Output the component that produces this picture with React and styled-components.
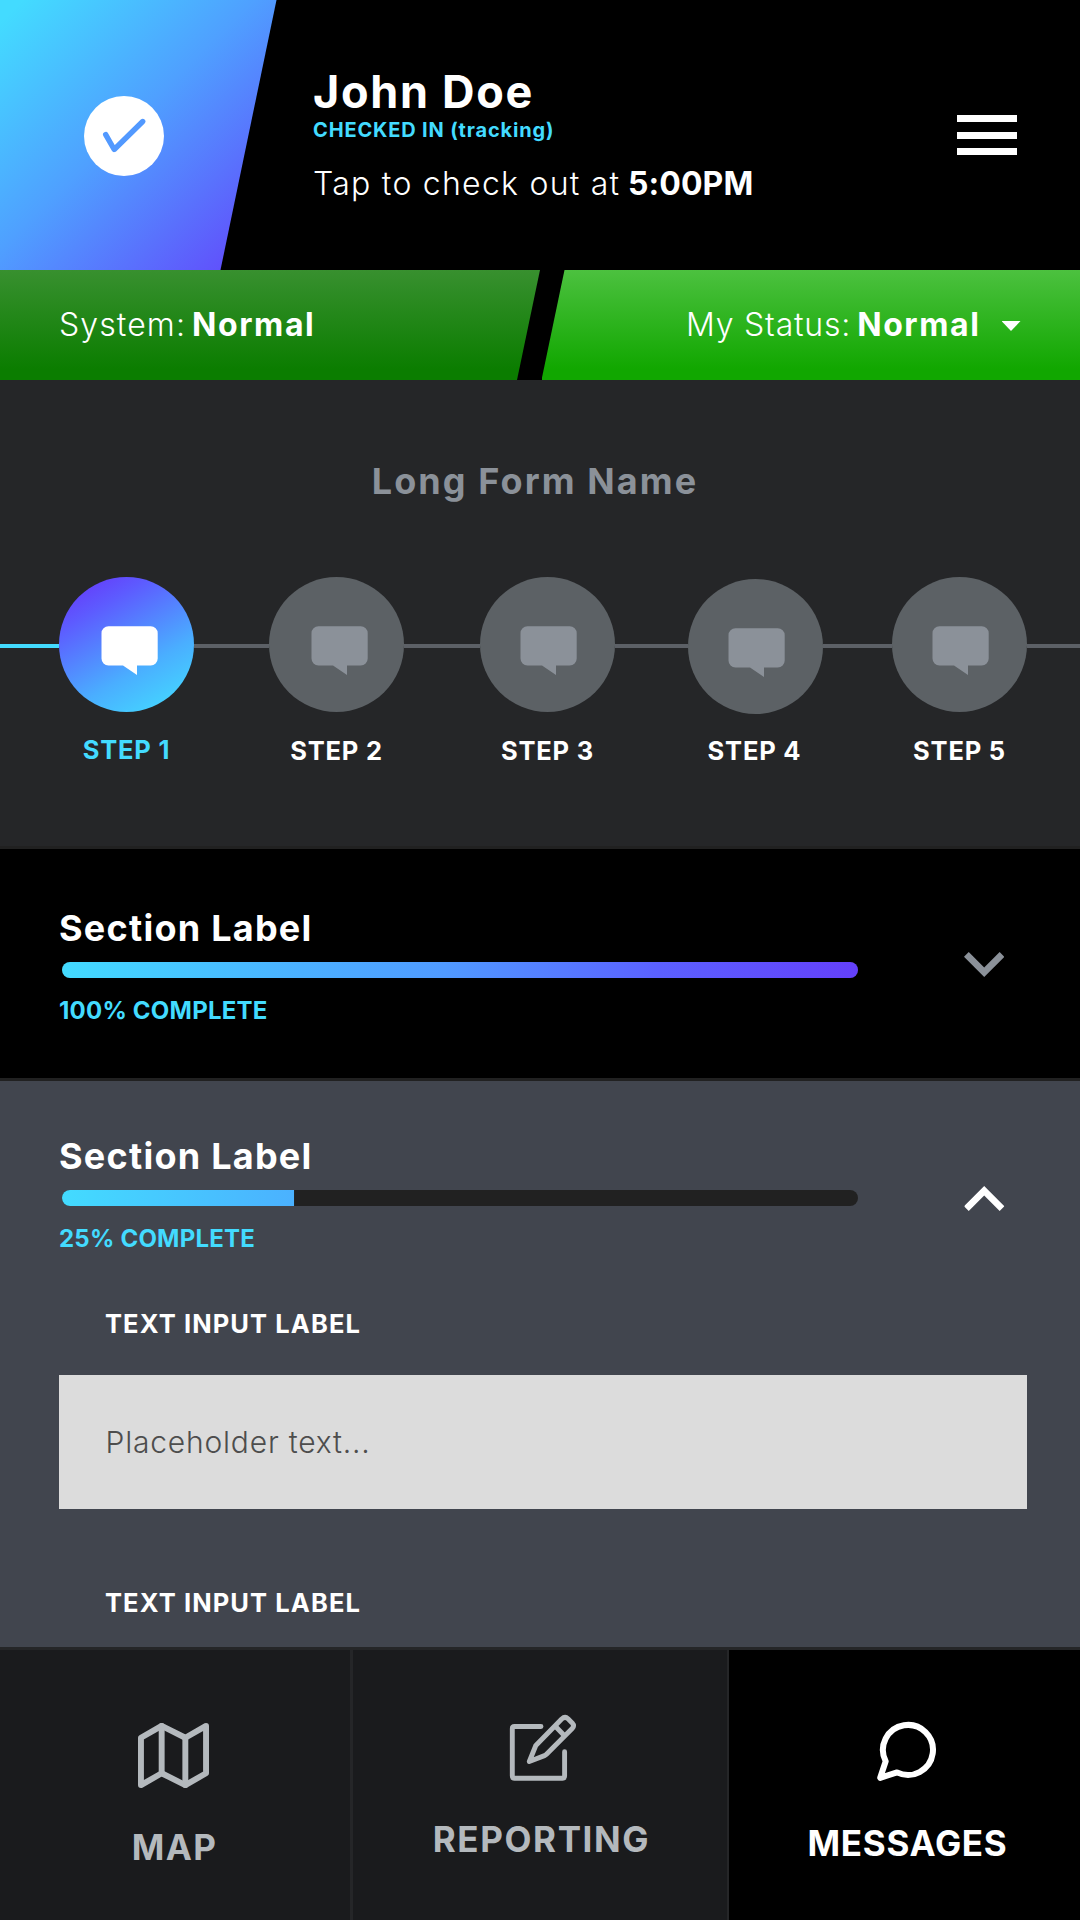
import { Fragment } from "react";
import { createGlobalStyle, styled } from "styled-components";
import { FiMap } from "react-icons/fi";

const steps = [
  { label: "STEP 1", active: true, iconLeft: 42, lineAfter: 75 },
  { label: "STEP 2", iconLeft: 42, lineAfter: 76 },
  { label: "STEP 3", iconLeft: 40, lineAfter: 73 },
  { label: "STEP 4", iconLeft: 40, lineAfter: 69, drop: 2 },
  { label: "STEP 5", iconLeft: 40, lineAfter: 53 },
];

const CheckIcon = () => (
  <svg width="80" height="80" viewBox="0 0 80 80" fill="none">
    <circle cx="40" cy="40" r="40" fill="#fff" />
    <path
      d="M21.7 38.7L30.2 53.5L58.7 25.5"
      stroke="#5299ff"
      strokeWidth="5.4"
      strokeLinecap="round"
      strokeLinejoin="round"
    />
  </svg>
);

const ChatIcon = () => (
  <svg width="57" height="49" viewBox="0 0 57 49" fill="currentColor">
    <path d="M7.5 0.3H49.7a7 7 0 0 1 7 7V32.5a7 7 0 0 1-7 7H36V49L22 39.5H7.5a7 7 0 0 1-7-7V7.3a7 7 0 0 1 7-7Z" />
  </svg>
);

const ChevronIcon = () => (
  <svg width="40.4" height="25" viewBox="6 8.59 12 7.41" fill="currentColor">
    <path d="M7.41 8.59L12 13.17l4.59-4.58L18 10l-6 6-6-6z" />
  </svg>
);

const EditIcon = () => (
  <svg
    width="76"
    height="70"
    viewBox="2 8 76 70"
    fill="none"
    stroke="currentColor"
    strokeWidth="4.9"
    strokeLinecap="round"
    strokeLinejoin="round"
  >
    <path d="M41 21.5H14.5Q12.3 21.5 12.3 23.7V71Q12.3 73.3 14.5 73.3H62.3Q64.6 73.3 64.6 71V46.8" />
    <path d="M29.3 56.5L35.8 40.5L61.7 14Q65 10.9 68 13.7L72.2 17.9Q74.8 20.8 72.2 23.5L46.5 49.3Q45.6 50.2 44.5 50.6Z" />
    <path d="M56.3 22.2L64 30.2" />
  </svg>
);

const BubbleIcon = () => (
  <svg
    width="63"
    height="64"
    viewBox="10 10 63 64"
    fill="none"
    stroke="currentColor"
    strokeWidth="6"
    strokeLinejoin="round"
  >
    <path d="M20.7 51.3A25 25 0 1 1 32 62.4L15.2 67.8Z" />
  </svg>
);

const Section = ({ percent, filled, open, children }) => (
  <SectionContainer $open={open}>
    <SectionHeader>
      <SectionInfo>
        <SectionLabel>Section Label</SectionLabel>
        <ProgressTrack>
          <ProgressFill style={{ clipPath: `inset(0 ${100 - filled}% 0 0)` }} />
        </ProgressTrack>
        <SectionPercent>{percent}% COMPLETE</SectionPercent>
      </SectionInfo>
      <Toggle $open={open}>
        <ChevronIcon />
      </Toggle>
    </SectionHeader>
    {children}
  </SectionContainer>
);

const App = () => {
  return (
    <Screen>
      <GlobalStyle />
      <Header>
        <CheckIn>
          <CheckIcon />
        </CheckIn>
        <UserInfo>
          <UserName>John Doe</UserName>
          <UserState>CHECKED IN (tracking)</UserState>
          <UserHint>
            <Thin $spacing="1.25px">Tap to check out at</Thin>
            <Strong $spacing="0.1px">5:00PM</Strong>
          </UserHint>
        </UserInfo>
        <MenuButton>
          <MenuBar />
          <MenuBar />
          <MenuBar />
        </MenuButton>
      </Header>

      <StatusRow>
        <SystemStatus>
          <Thin $spacing="1.1px">System:</Thin>
          <Strong $spacing="1.6px">Normal</Strong>
        </SystemStatus>
        <MyStatus>
          <Thin $spacing="0.8px">My Status:</Thin>
          <Strong $spacing="1.6px">Normal</Strong>
          <Caret />
        </MyStatus>
      </StatusRow>

      <FormIntro>
        <FormTitle>Long Form Name</FormTitle>
        <Stepper>
          <StepLine $width={59} $active />
          {steps.map((step) => (
            <Fragment key={step.label}>
              <Step>
                <StepCircle $active={step.active} $iconLeft={step.iconLeft} $drop={step.drop}>
                  <ChatIcon />
                </StepCircle>
                <StepLabel $active={step.active} $drop={step.drop}>
                  {step.label}
                </StepLabel>
              </Step>
              <StepLine $width={step.lineAfter} />
            </Fragment>
          ))}
        </Stepper>
      </FormIntro>

      <Section percent={100} filled={100} />
      <Section percent={25} filled={29.15} open>
        <InputLabel>TEXT INPUT LABEL</InputLabel>
        <InputField>Placeholder text...</InputField>
        <InputLabel $next>TEXT INPUT LABEL</InputLabel>
      </Section>

      <NavBar>
        <NavItem $top={70} $gap={36}>
          <FiMap size={71} />
          <NavLabel $spacing="1.4px">MAP</NavLabel>
        </NavItem>
        <NavItem $top={63} $gap={36} $divided>
          <EditIcon />
          <NavLabel $spacing="1.6px" $shift={3}>REPORTING</NavLabel>
        </NavItem>
        <NavItem $top={70} $gap={39} $active>
          <BubbleIcon />
          <NavLabel $spacing="0.7px">MESSAGES</NavLabel>
        </NavItem>
      </NavBar>
    </Screen>
  );
};

export default App;

const GlobalStyle = createGlobalStyle`
  * {
    box-sizing: border-box;
  }

  body {
    margin: 0;
    background: #000;
  }

  svg {
    display: block;
    flex-shrink: 0;
  }
`;

const Screen = styled.div`
  width: 1080px;
  height: 1920px;
  display: flex;
  flex-direction: column;
  overflow: hidden;
  background: #000;
  color: #fff;
  font-family: Inter, "Open Sans", sans-serif;
  white-space: nowrap;
`;

const Thin = styled.span`
  font-weight: 300;
  letter-spacing: ${({ $spacing }) => $spacing};
`;

const Strong = styled.span`
  font-weight: 700;
  letter-spacing: ${({ $spacing }) => $spacing};
`;

const Header = styled.header`
  display: flex;
  flex-shrink: 0;
  height: 270px;
`;

const CheckIn = styled.div`
  width: 277px;
  padding: 96px 0 0 84px;
  background: linear-gradient(to bottom right, #43dbff 4%, #4fa0ff 46%, #6440fb 100%);
  clip-path: polygon(0 0, 276.5px 0, 220.5px 100%, 0 100%);
`;

const UserInfo = styled.div`
  flex: 1;
  padding: 70px 0 0 36px;
`;

const UserName = styled.div`
  font-size: 45px;
  line-height: 44px;
  font-weight: 700;
  letter-spacing: 1.7px;
`;

const UserState = styled.div`
  margin-top: 1px;
  font-size: 20px;
  line-height: 30px;
  font-weight: 700;
  letter-spacing: 0.84px;
  color: #43dbff;
`;

const UserHint = styled.div`
  display: flex;
  gap: 7.5px;
  margin-top: 19px;
  font-size: 32px;
  line-height: 40px;
`;

const MenuButton = styled.div`
  display: flex;
  flex-direction: column;
  gap: 9.5px;
  width: 60px;
  margin: 115px 63px 0 0;
`;

const MenuBar = styled.div`
  height: 7px;
  background: #fff;
`;

const StatusRow = styled.div`
  display: flex;
  flex-shrink: 0;
  justify-content: space-between;
  height: 110px;
  font-size: 32px;
  line-height: 40px;
`;

const SystemStatus = styled.div`
  display: flex;
  align-items: center;
  gap: 6px;
  width: 540px;
  padding-left: 59px;
  background: linear-gradient(#38902f, #0b7d00 90%);
  clip-path: polygon(0 0, 100% 0, 517px 100%, 0 100%);
`;

const MyStatus = styled.div`
  display: flex;
  align-items: center;
  justify-content: flex-end;
  gap: 6px;
  width: 538.5px;
  padding-right: 59.5px;
  background: linear-gradient(#4cc13f, #11a700 90%);
  clip-path: polygon(23px 0, 100% 0, 100% 100%, 0 100%);
`;

const Caret = styled.div`
  width: 19px;
  height: 10px;
  margin: 2px 0 0 15px;
  background: #fff;
  clip-path: polygon(0 0, 100% 0, 50% 100%);
`;

const FormIntro = styled.section`
  flex-shrink: 0;
  height: 469px;
  padding-top: 81px;
  background: #252628;
  border-bottom: 3px solid #212121;
`;

const FormTitle = styled.div`
  padding-right: 10px;
  font-size: 36px;
  line-height: 40px;
  font-weight: 700;
  letter-spacing: 2.1px;
  text-align: center;
  color: #8b9199;
`;

const Stepper = styled.div`
  display: flex;
  margin-top: 76px;
`;

const StepLine = styled.div`
  flex-shrink: 0;
  width: ${({ $width }) => $width}px;
  height: 4px;
  margin-top: 67px;
  background: ${({ $active }) => ($active ? "#43dbff" : "#5c6066")};
`;

const Step = styled.div`
  flex-shrink: 0;
  width: 135px;
`;

const StepCircle = styled.div`
  height: 135px;
  margin-top: ${({ $drop = 0 }) => $drop}px;
  padding: 49px 0 0 ${({ $iconLeft }) => $iconLeft}px;
  border-radius: 50%;
  background: ${({ $active }) =>
    $active ? "linear-gradient(150deg, #6440fb 10%, #5d5bff 25%, #4aaeff 65%, #43dbff 95%)" : "#5c6165"};
  color: ${({ $active }) => ($active ? "#fff" : "#8b9199")};
`;

const StepLabel = styled.div`
  margin-top: ${({ $drop = 0, $active }) => ($active ? 23 : 24 - $drop)}px;
  padding-right: ${({ $drop = 0 }) => $drop}px;
  font-size: 25.5px;
  line-height: 30px;
  font-weight: 700;
  letter-spacing: 0.8px;
  text-align: center;
  color: ${({ $active }) => ($active ? "#43dbff" : "#fff")};
`;

const SectionContainer = styled.section`
  flex-shrink: 0;
  height: ${({ $open }) => ($open ? 566 : 232)}px;
  padding: ${({ $open }) => ($open ? 55 : 59)}px 53px 0 59px;
  background: ${({ $open }) => ($open ? "#41454e" : "#000")};
  border-bottom: ${({ $open }) => ($open ? "none" : "3px solid #212121")};
`;

const SectionHeader = styled.div`
  display: flex;
`;

const SectionInfo = styled.div`
  width: 799px;
`;

const SectionLabel = styled.div`
  font-size: 36px;
  line-height: 40px;
  font-weight: 700;
  letter-spacing: 1.25px;
`;

const ProgressTrack = styled.div`
  height: 16px;
  margin: 14px 0 18px 3px;
  border-radius: 8px;
  background: #212121;
  overflow: hidden;
`;

const ProgressFill = styled.div`
  height: 100%;
  background: linear-gradient(to right, #43dbff, #4bb0ff 30%, #509aff 48%, #5b60ff 75%, #6440fb);
`;

const SectionPercent = styled.div`
  font-size: 24px;
  line-height: 30px;
  font-weight: 700;
  letter-spacing: 0.22px;
  color: #43dbff;
`;

const Toggle = styled.div`
  margin: ${({ $open }) => ($open ? 50 : 43.5)}px 0 0 106px;
  height: 25px;
  color: ${({ $open }) => ($open ? "#fff" : "#8b9199")};
  transform: ${({ $open }) => ($open ? "rotate(180deg)" : "none")};
`;

const InputLabel = styled.div`
  margin: ${({ $next }) => ($next ? 79 : 55)}px 0 0 46px;
  font-size: 25.5px;
  line-height: 30px;
  font-weight: 700;
  letter-spacing: 1.1px;
`;

const InputField = styled.div`
  height: 134px;
  margin-top: 36px;
  padding-left: 46.5px;
  background: #dcdcdc;
  font-size: 30px;
  line-height: 135px;
  font-weight: 300;
  letter-spacing: 0.8px;
  color: #4d4d4d;
`;

const NavBar = styled.nav`
  display: grid;
  grid-template-columns: 350px 379px 351px;
  flex: 1;
  border-top: 3px solid #252628;
`;

const NavItem = styled.div`
  display: flex;
  flex-direction: column;
  align-items: center;
  gap: ${({ $gap }) => $gap}px;
  padding-top: ${({ $top }) => $top}px;
  padding-left: ${({ $active }) => ($active ? 4 : 0)}px;
  padding-right: ${({ $active, $divided }) => ($active || $divided ? 0 : 3)}px;
  border: solid #252628;
  border-width: ${({ $divided }) => ($divided ? "0 2px 0 3px" : "0")};
  background: ${({ $active }) => ($active ? "#000" : "#1a1b1d")};
  color: ${({ $active }) => ($active ? "#fff" : "#b4b9bd")};
`;

const NavLabel = styled.div`
  padding-left: ${({ $shift = 2 }) => $shift}px;
  font-size: 35px;
  line-height: 40px;
  font-weight: 700;
  letter-spacing: ${({ $spacing }) => $spacing};
`;
